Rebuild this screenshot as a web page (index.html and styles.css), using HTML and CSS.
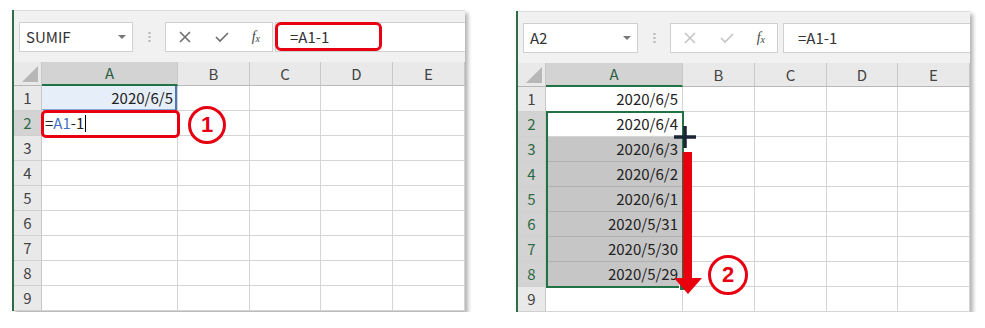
FILE: index.html
```html
<!DOCTYPE html>
<html lang="ja">
<head>
  <meta charset="UTF-8" />
  <title>Excel fill down</title>
  <link rel="stylesheet" href="styles.css">
</head>
<body>
  <div class="shots">

    <!-- left: typing the formula -->
    <div class="excel left">
      <div class="fbar">
        <div class="namebox">SUMIF<span class="drop"></span></div>
        <div class="grip"></div>
        <div class="btns">
          <svg class="ico" width="14" height="14" viewBox="0 0 14 14"><path d="M2 2L12 12M12 2L2 12" /></svg>
          <svg class="ico" width="16" height="14" viewBox="0 0 16 14"><path d="M2 7L6 11L14 3" /></svg>
          <span class="fx"><i>f</i><sub>x</sub></span>
        </div>
        <div class="finput">=A1-1</div>
        <div class="mark-formula"></div>
      </div>
      <div class="sheet">
        <div class="corner"><span></span></div>
        <div class="ch sel">A</div><div class="ch">B</div><div class="ch">C</div><div class="ch">D</div><div class="ch">E</div>

        <div class="rh">1</div><div class="c num ref">2020/6/5</div><div class="c"></div><div class="c"></div><div class="c"></div><div class="c"></div>
        <div class="rh sel">2</div><div class="c edit">=<span class="blue">A1</span>-1<span class="caret"></span></div><div class="c"></div><div class="c"></div><div class="c"></div><div class="c"></div>
        <div class="rh">3</div><div class="c"></div><div class="c"></div><div class="c"></div><div class="c"></div><div class="c"></div>
        <div class="rh">4</div><div class="c"></div><div class="c"></div><div class="c"></div><div class="c"></div><div class="c"></div>
        <div class="rh">5</div><div class="c"></div><div class="c"></div><div class="c"></div><div class="c"></div><div class="c"></div>
        <div class="rh">6</div><div class="c"></div><div class="c"></div><div class="c"></div><div class="c"></div><div class="c"></div>
        <div class="rh">7</div><div class="c"></div><div class="c"></div><div class="c"></div><div class="c"></div><div class="c"></div>
        <div class="rh">8</div><div class="c"></div><div class="c"></div><div class="c"></div><div class="c"></div><div class="c"></div>
        <div class="rh">9</div><div class="c"></div><div class="c"></div><div class="c"></div><div class="c"></div><div class="c"></div>

        <div class="mark-cell"></div>
        <div class="step one">1</div>
      </div>
    </div>

    <!-- right: dragging the fill handle -->
    <div class="excel right">
      <div class="fbar">
        <div class="namebox">A2<span class="drop"></span></div>
        <div class="grip"></div>
        <div class="btns">
          <svg class="ico off" width="14" height="14" viewBox="0 0 14 14"><path d="M2 2L12 12M12 2L2 12" /></svg>
          <svg class="ico off" width="16" height="14" viewBox="0 0 16 14"><path d="M2 7L6 11L14 3" /></svg>
          <span class="fx"><i>f</i><sub>x</sub></span>
        </div>
        <div class="finput">=A1-1</div>
      </div>
      <div class="sheet wide">
        <div class="corner"><span></span></div>
        <div class="ch sel">A</div><div class="ch">B</div><div class="ch">C</div><div class="ch">D</div><div class="ch">E</div>

        <div class="rh">1</div><div class="c num">2020/6/5</div><div class="c"></div><div class="c"></div><div class="c"></div><div class="c"></div>
        <div class="rh sel">2</div><div class="c num">2020/6/4</div><div class="c"></div><div class="c"></div><div class="c"></div><div class="c"></div>
        <div class="rh sel">3</div><div class="c num fill">2020/6/3</div><div class="c"></div><div class="c"></div><div class="c"></div><div class="c"></div>
        <div class="rh sel">4</div><div class="c num fill">2020/6/2</div><div class="c"></div><div class="c"></div><div class="c"></div><div class="c"></div>
        <div class="rh sel">5</div><div class="c num fill">2020/6/1</div><div class="c"></div><div class="c"></div><div class="c"></div><div class="c"></div>
        <div class="rh sel">6</div><div class="c num fill">2020/5/31</div><div class="c"></div><div class="c"></div><div class="c"></div><div class="c"></div>
        <div class="rh sel">7</div><div class="c num fill">2020/5/30</div><div class="c"></div><div class="c"></div><div class="c"></div><div class="c"></div>
        <div class="rh sel">8</div><div class="c num fill">2020/5/29</div><div class="c"></div><div class="c"></div><div class="c"></div><div class="c"></div>
        <div class="rh">9</div><div class="c"></div><div class="c"></div><div class="c"></div><div class="c"></div><div class="c"></div>

        <div class="selection"><span class="handle"></span></div>
        <svg class="cross" width="26" height="26" viewBox="0 0 26 26">
          <path d="M13 2V24M2 13H24" />
        </svg>
        <svg class="arrow" width="28" height="142" viewBox="0 0 28 142">
          <rect x="9" y="0" width="9" height="127" />
          <polygon points="0,126 28,126 14,142" />
        </svg>
        <div class="step two">2</div>
      </div>
    </div>

  </div>
</body>
</html>
```

FILE: styles.css
```css
:root {
  --green: #217346;
  --grid: #d4d4d4;
  --head: #e9e9e9;
  --red: #e60012;
}

body {
  margin: 0;
  background: #fff;
  font-family: "Noto Sans CJK JP", "Noto Sans", sans-serif;
  color: #222;
}

.shots {
  display: flex;
  gap: 51px;
  padding: 10px 0 0 12px;
  align-items: flex-start;
}

.excel {
  border-left: 2px solid #2f6b44;
  background: #fff;
  box-shadow: 3px 3px 4px rgba(0, 0, 0, 0.3);
}

.excel.right {
  margin-top: 1px;
}

/* formula bar */
.fbar {
  position: relative;
  height: 52px;
  background: #f1f1f1;
  border-top: 1px solid #dcdcdc;
  box-sizing: border-box;
  display: flex;
  align-items: center;
  padding-left: 5px;
}

.namebox {
  position: relative;
  width: 114px;
  height: 30px;
  box-sizing: border-box;
  background: #fff;
  border: 1px solid #d0d0d0;
  font-size: 15px;
  line-height: 28px;
  padding-left: 6px;
  color: #333;
}

.right .namebox {
  width: 115px;
}

.drop {
  position: absolute;
  right: 6px;
  top: 12px;
  border-left: 4px solid transparent;
  border-right: 4px solid transparent;
  border-top: 4px solid #777;
}

.grip {
  width: 32px;
  height: 14px;
  background: radial-gradient(circle, #b9b9b9 1px, transparent 1.3px) center / 3px 4px repeat-y;
}

.btns {
  width: 108px;
  height: 30px;
  box-sizing: border-box;
  background: #fff;
  border: 1px solid #d0d0d0;
  display: flex;
  align-items: center;
  justify-content: space-between;
  padding: 0 12px 0 12px;
}

.ico path {
  fill: none;
  stroke: #6d6d6d;
  stroke-width: 1.6;
}

.ico.off path {
  stroke: #c4c4c4;
}

.fx {
  font-family: "Liberation Serif", serif;
  font-size: 14px;
  color: #444;
}

.fx sub {
  font-size: 10px;
  font-style: italic;
  vertical-align: -1px;
}

.finput {
  flex: 1;
  height: 30px;
  margin-left: 2px;
  box-sizing: border-box;
  background: #fff;
  border: 1px solid #d0d0d0;
  border-right: none;
  font-size: 15px;
  line-height: 28px;
  padding-left: 14px;
  color: #333;
}

.right .finput {
  margin-left: 5px;
}

.mark-formula {
  position: absolute;
  left: 261px;
  top: 11px;
  width: 107px;
  height: 29px;
  box-sizing: border-box;
  border: 3px solid var(--red);
  border-radius: 6px;
}

/* sheet grid */
.sheet {
  position: relative;
  display: grid;
  grid-template-columns: 28px 136px 72px 71px 72px 72px;
  grid-template-rows: 24px repeat(9, 25px);
  font-size: 15px;
}

.sheet.wide {
  grid-template-columns: 28px 137px 72px 72px 71px 72px;
}

.corner {
  background: var(--head);
  border-right: 1px solid #c8c8c8;
  border-bottom: 1px solid #b8b8b8;
  position: relative;
}

.corner span {
  position: absolute;
  right: 3px;
  bottom: 3px;
  width: 16px;
  height: 16px;
  background: #b7b7b7;
  clip-path: polygon(100% 0, 100% 100%, 0 100%);
}

.ch {
  background: var(--head);
  border-right: 1px solid #c8c8c8;
  border-bottom: 1px solid #b8b8b8;
  text-align: center;
  line-height: 23px;
  color: #444;
}

.ch.sel {
  background: #d3d3d3;
  border-bottom: 2px solid var(--green);
  color: #2d5f3f;
  line-height: 22px;
}

.rh {
  background: var(--head);
  border-right: 1px solid #c8c8c8;
  border-bottom: 1px solid #d0d0d0;
  text-align: center;
  line-height: 24px;
  color: #444;
}

.rh.sel {
  background: #d3d3d3;
  color: #2d6a43;
}

.c {
  border-right: 1px solid var(--grid);
  border-bottom: 1px solid var(--grid);
  line-height: 24px;
  white-space: nowrap;
}

.num {
  text-align: right;
  padding-right: 4px;
}

.fill {
  background: #c6c6c6;
  border-bottom-color: #b0b0b0;
}

.ref {
  background: #e6eef9;
  box-shadow: inset -2px 0 0 #4f76b8, inset 0 -1px 0 #8aa6d6;
}

.edit {
  padding-left: 3px;
  position: relative;
  z-index: 1;
}

.blue {
  color: #4472c4;
}

.caret {
  display: inline-block;
  width: 1px;
  height: 17px;
  background: #000;
  vertical-align: -3px;
  margin-left: 1px;
}

/* annotations */
.mark-cell {
  position: absolute;
  left: 27px;
  top: 48px;
  width: 139px;
  height: 28px;
  box-sizing: border-box;
  border: 3px solid var(--red);
  border-radius: 5px;
  z-index: 2;
}

.step {
  position: absolute;
  width: 38px;
  height: 38px;
  box-sizing: border-box;
  border: 3px solid var(--red);
  border-radius: 50%;
  background: #fff;
  color: var(--red);
  font-family: "Liberation Sans", sans-serif;
  font-weight: bold;
  font-size: 22px;
  line-height: 32px;
  text-align: center;
}

.step.one {
  left: 174px;
  top: 44px;
}

.step.two {
  left: 190px;
  top: 192px;
  width: 40px;
  height: 40px;
  line-height: 34px;
}

.selection {
  position: absolute;
  left: 28px;
  top: 48px;
  width: 138px;
  height: 177px;
  box-sizing: border-box;
  border: 2px solid var(--green);
}

.handle {
  position: absolute;
  right: -5px;
  bottom: -5px;
  width: 6px;
  height: 6px;
  background: var(--green);
  border: 1px solid #fff;
}

.cross {
  position: absolute;
  left: 154px;
  top: 61px;
}

.cross path {
  stroke: #1c2536;
  stroke-width: 3.5;
  fill: none;
}

.arrow {
  position: absolute;
  left: 156px;
  top: 89px;
}

.arrow rect,
.arrow polygon {
  fill: #e8000f;
}
```
